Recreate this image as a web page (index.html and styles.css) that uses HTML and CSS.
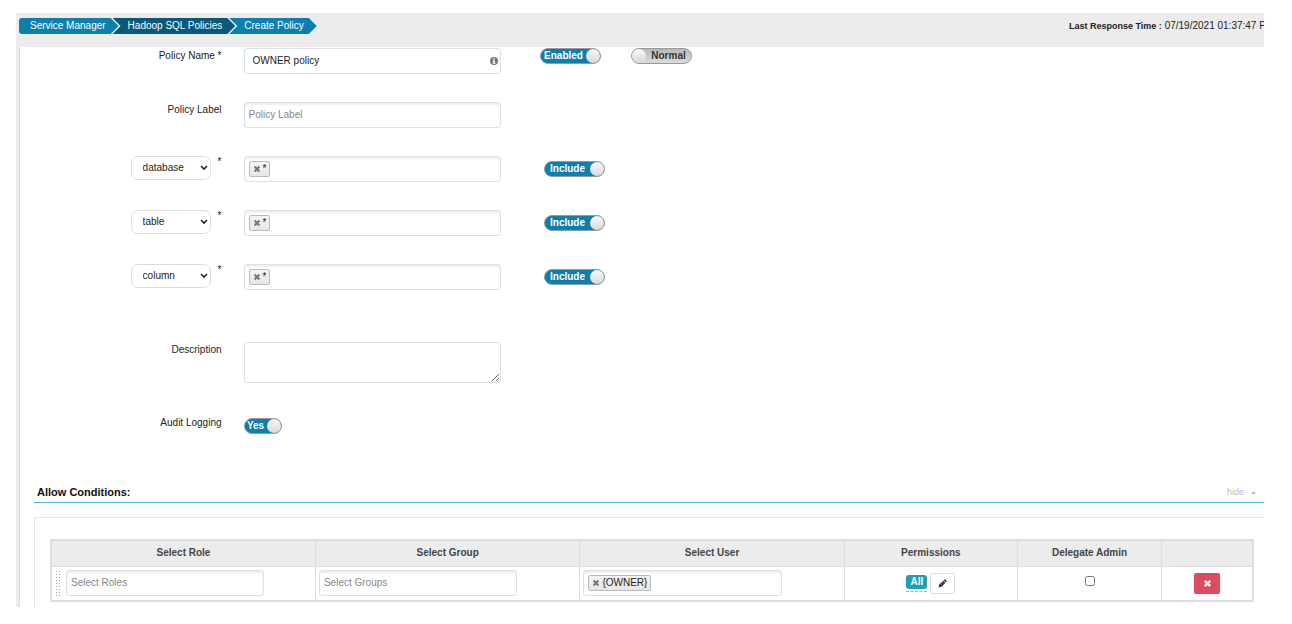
FILE: index.html
```
<!DOCTYPE html>
<html lang="en">
<head>
  <meta charset="UTF-8">
  <title>Create Policy</title>
  <link rel="stylesheet" href="styles.css">
</head>
<body>

  <!-- shared icons -->
  <svg class="sprite" aria-hidden="true">
    <symbol id="icon-times" viewBox="0 0 10 10">
      <path d="M2 2l6 6M8 2l-6 6" fill="none" stroke="currentColor" stroke-width="2.6"/>
    </symbol>
    <symbol id="icon-info" viewBox="0 0 16 16">
      <circle cx="8" cy="8" r="8" fill="currentColor"/>
      <path d="M6.5 2.5h3v2.6h-3zM5.4 6.4h4.2v5h1.2v1.9H5.4v-1.9h1.2V8.3H5.4z" fill="#fff"/>
    </symbol>
    <symbol id="icon-pencil" viewBox="0 0 16 16">
      <path d="M1 15l1-4.6L9.4 3l3.6 3.6L5.6 14zM10.3 2.1l1.3-1.3q.7-.6 1.4 0l2.2 2.2q.6.7 0 1.4l-1.3 1.3z" fill="currentColor"/>
      <path d="M4.5 10.8l5.5-5.5" stroke="#fff" stroke-width=".8"/>
      <path d="M2.3 12.2l1.5 1.5" stroke="#fff" stroke-width="1"/>
    </symbol>
  </svg>

  <div class="app">
    <header class="topbar">
      <nav class="breadcrumb" aria-label="Breadcrumb">
        <a href="#">Service Manager</a>
        <a href="#" class="dark">Hadoop SQL Policies</a>
        <a href="#" aria-current="page">Create Policy</a>
      </nav>
      <p class="response"><strong>Last Response Time :</strong> 07/19/2021 01:37:47 PM</p>
    </header>

    <main class="panel">
      <form class="policy-form">
        <div class="form-row">
          <label class="form-label" for="policyName">Policy Name *</label>
          <div class="field field-icon">
            <input type="text" id="policyName" value="OWNER policy">
            <svg class="info"><use href="#icon-info"/></svg>
          </div>
          <div class="switches">
            <label class="toggle"><input type="checkbox" checked><span>Enabled</span></label>
            <label class="toggle"><input type="checkbox"><span>Normal</span></label>
          </div>
        </div>

        <div class="form-row">
          <label class="form-label" for="policyLabel">Policy Label</label>
          <div class="field inset"><input type="text" id="policyLabel" placeholder="Policy Label"></div>
        </div>

        <div class="form-row">
          <div class="resource">
            <select aria-label="Database level"><option>database</option><option>url</option></select>
            <span class="required">*</span>
          </div>
          <div class="field inset">
            <span class="tag"><button type="button" aria-label="Remove"><svg><use href="#icon-times"/></svg></button>*</span>
            <input type="text" aria-label="Database">
          </div>
          <div class="switches include">
            <label class="toggle"><input type="checkbox" checked><span>Include</span></label>
          </div>
        </div>

        <div class="form-row">
          <div class="resource">
            <select aria-label="Table level"><option>table</option><option>udf</option></select>
            <span class="required">*</span>
          </div>
          <div class="field inset">
            <span class="tag"><button type="button" aria-label="Remove"><svg><use href="#icon-times"/></svg></button>*</span>
            <input type="text" aria-label="Table">
          </div>
          <div class="switches include">
            <label class="toggle"><input type="checkbox" checked><span>Include</span></label>
          </div>
        </div>

        <div class="form-row">
          <div class="resource">
            <select aria-label="Column level"><option>column</option><option>none</option></select>
            <span class="required">*</span>
          </div>
          <div class="field inset">
            <span class="tag"><button type="button" aria-label="Remove"><svg><use href="#icon-times"/></svg></button>*</span>
            <input type="text" aria-label="Column">
          </div>
          <div class="switches include">
            <label class="toggle"><input type="checkbox" checked><span>Include</span></label>
          </div>
        </div>

        <div class="form-row description">
          <label class="form-label" for="description">Description</label>
          <textarea id="description"></textarea>
        </div>

        <div class="form-row audit">
          <label class="form-label" for="audit">Audit Logging</label>
          <div>
            <label class="toggle small"><input type="checkbox" id="audit" checked><span>Yes</span></label>
          </div>
        </div>
      </form>

      <section class="conditions">
        <div class="section-head">
          <h2>Allow Conditions:</h2>
          <a href="#">hide <svg viewBox="0 0 10 6"><path d="M0 6l5-6 5 6z" fill="currentColor"/></svg></a>
        </div>

        <div class="table-box">
          <table>
            <thead>
              <tr>
                <th class="wide">Select Role</th>
                <th class="wide">Select Group</th>
                <th class="wide">Select User</th>
                <th class="perm">Permissions</th>
                <th class="admin">Delegate Admin</th>
                <th></th>
              </tr>
            </thead>
            <tbody>
              <tr>
                <td>
                  <div class="role-cell">
                    <span class="handle"></span>
                    <div class="field inset"><input type="text" placeholder="Select Roles" aria-label="Select Roles"></div>
                  </div>
                </td>
                <td><div class="field inset"><input type="text" placeholder="Select Groups" aria-label="Select Groups"></div></td>
                <td>
                  <div class="field inset">
                    <span class="tag"><button type="button" aria-label="Remove"><svg><use href="#icon-times"/></svg></button>{OWNER}</span>
                    <input type="text" aria-label="Select User">
                  </div>
                </td>
                <td>
                  <div class="perm-cell">
                    <span class="perm-value"><span class="badge">All</span></span>
                    <button type="button" class="btn-edit" aria-label="Edit permissions"><svg><use href="#icon-pencil"/></svg></button>
                  </div>
                </td>
                <td class="center"><input type="checkbox" class="check" aria-label="Delegate Admin"></td>
                <td class="center"><button type="button" class="btn-delete" aria-label="Delete row"><svg><use href="#icon-times"/></svg></button></td>
              </tr>
            </tbody>
          </table>
        </div>
      </section>
    </main>
  </div>

</body>
</html>
```
FILE: styles.css
```
* {
  box-sizing: border-box;
}

body {
  margin: 0;
  padding: 13px 28px 17px 16px;
  background: #fff;
  font-family: "Liberation Sans", Arial, sans-serif;
  font-size: 10px;
  line-height: 16px;
  color: #222;
}

input,
select,
textarea,
button {
  font: inherit;
  color: inherit;
}

button {
  padding: 0;
  cursor: pointer;
}

.sprite {
  position: absolute;
  width: 0;
  height: 0;
}

.app {
  overflow: hidden;
  background: #ececec;
}

/* top bar */
.topbar {
  display: flex;
  justify-content: space-between;
  align-items: flex-start;
  height: 34px;
  padding: 5px 0 0 3px;
}

.breadcrumb {
  display: flex;
}

.breadcrumb a {
  height: 16px;
  margin-right: -6px;
  padding: 0 13px 0 15px;
  background: #0b7fad;
  clip-path: polygon(0 0, calc(100% - 8px) 0, 100% 50%, calc(100% - 8px) 100%, 0 100%, 8px 50%);
  color: #fff;
  text-decoration: none;
  white-space: nowrap;
}

.breadcrumb a:first-child {
  padding-left: 11px;
  border-radius: 3px 0 0 3px;
  clip-path: polygon(0 0, calc(100% - 8px) 0, 100% 50%, calc(100% - 8px) 100%, 0 100%);
}

.breadcrumb .dark {
  background: #085a7c;
}

.response {
  width: 195px;
  margin: 0;
  overflow: hidden;
  white-space: nowrap;
}

.response strong {
  font-size: 9px;
}

/* form */
.panel {
  margin-left: 3px;
  border-left: 1px solid #ddd;
  background: #fff;
}

.policy-form {
  padding-top: 1px;
}

.form-row {
  display: grid;
  grid-template-columns: 16.2% 20.7% 1fr;
  column-gap: 22px;
  align-items: start;
  margin-bottom: 28px;
}

.form-label {
  text-align: right;
}

.field {
  display: flex;
  align-items: center;
  height: 26px;
  padding: 0 4px;
  border: 1px solid #dce1e6;
  border-radius: 3px;
  background: #fff;
}

.inset {
  box-shadow: inset 0 2px 2px #eee;
}

.field input {
  flex: 1;
  min-width: 0;
  padding: 0;
  border: 0;
  outline: 0;
  background: none;
}

.field ::placeholder {
  color: #888;
}

.field-icon {
  padding: 0 2px 0 8px;
}

.info {
  width: 8px;
  height: 8px;
  color: #777;
}

.tag {
  display: flex;
  align-items: center;
  gap: 2px;
  height: 16px;
  padding: 0 3px;
  border: 1px solid #bbb;
  border-radius: 2px;
  background: linear-gradient(#f4f4f4, #e6e6e6);
}

.tag button {
  display: flex;
  border: 0;
  background: none;
  color: #777;
}

.tag svg {
  width: 8px;
  height: 8px;
}

.resource {
  display: flex;
  justify-content: flex-end;
  gap: 7px;
}

.resource select {
  width: 80px;
  height: 24px;
  padding: 0 11px;
  border: 1px solid #ddd;
  border-radius: 7px;
  appearance: none;
  background: #fff url("data:image/svg+xml,%3Csvg xmlns='http://www.w3.org/2000/svg' width='8' height='6'%3E%3Cpath d='M1 1l3 3 3-3' fill='none' stroke='%23222' stroke-width='1.6'/%3E%3C/svg%3E") no-repeat right 2px center;
}

.required {
  line-height: 12px;
}

textarea {
  height: 41px;
  border: 1px solid #dce1e6;
  border-radius: 3px;
  resize: vertical;
}

.description {
  margin-top: 52px;
}

.audit {
  margin: 32px 0 0;
}

/* toggle switches */
.switches {
  display: flex;
  gap: 30px;
  padding-left: 17px;
}

.include {
  padding: 5px 0 0 21px;
}

.toggle {
  position: relative;
  display: flex;
  align-items: center;
  width: 61px;
  height: 16px;
  border: 1px solid #999;
  border-radius: 8px;
  background: linear-gradient(#b8b8b8, #dcdcdc);
  color: #333;
  font-weight: bold;
  line-height: 14px;
  cursor: pointer;
}

.toggle input {
  position: absolute;
  opacity: 0;
}

.toggle span {
  flex: 1;
  text-align: center;
}

.toggle::before {
  content: "";
  width: 14px;
  height: 14px;
  border-radius: 50%;
  background: linear-gradient(#fafafa, #d8d8d8);
}

.toggle:has(:checked) {
  background: #0b7fad;
  color: #fff;
}

.toggle:has(:checked)::before {
  order: 1;
}

.small {
  width: 38px;
  margin-top: 3px;
}

/* allow conditions */
.conditions {
  padding: 50px 0 0 14px;
}

.section-head {
  display: flex;
  justify-content: space-between;
  padding: 0 8px 2px 3px;
  border-bottom: 1px solid #4db2dc;
}

.section-head h2 {
  margin: 0;
  font-size: 11px;
  color: #111;
}

.section-head a {
  display: flex;
  align-items: center;
  gap: 7px;
  color: #bbb;
  font-size: 9px;
  text-decoration: none;
}

.section-head svg {
  width: 5px;
  height: 3px;
}

.table-box {
  margin-top: 14px;
  padding: 21px 10px 5px 15px;
  border: solid #e6e6e6;
  border-width: 1px 0 0 1px;
  border-radius: 3px 0 0 0;
}

table {
  width: 100%;
  table-layout: fixed;
  border-collapse: collapse;
  border: 2px solid #ddd;
}

th,
td {
  border: 1px solid #ddd;
}

th {
  height: 26px;
  padding: 0;
  background: #ececec;
  color: #444;
}

td {
  height: 35px;
  padding: 0 3px;
}

.wide {
  width: 22%;
}

.perm {
  width: 14.4%;
}

.admin {
  width: 12%;
}

td .field {
  width: 77%;
}

.role-cell {
  display: flex;
  align-items: center;
  gap: 6px;
}

.handle {
  width: 5px;
  height: 27px;
  background: radial-gradient(circle, #aaa 1px, transparent 1px) 0 0 / 3px 3px;
}

.perm-cell {
  display: flex;
  justify-content: center;
  align-items: center;
  gap: 3px;
}

.perm-value {
  padding-bottom: 2px;
  border-bottom: 1px dashed #8ab6e0;
}

.badge {
  display: block;
  height: 14px;
  padding: 0 4px;
  border-radius: 3px;
  background: #17a2b8;
  color: #fff;
  font-weight: bold;
  line-height: 14px;
}

.btn-edit {
  display: flex;
  justify-content: center;
  align-items: center;
  width: 25px;
  height: 21px;
  border: 1px solid #ddd;
  border-radius: 2px;
  background: #fff;
}

.btn-edit svg {
  width: 9px;
  height: 9px;
}

.center {
  text-align: center;
}

.check {
  width: 10px;
  height: 10px;
  margin: 0;
}

.btn-delete {
  display: inline-flex;
  justify-content: center;
  align-items: center;
  width: 26px;
  height: 21px;
  border: 0;
  border-radius: 2px;
  background: #dc4c5e;
  color: #fff;
  vertical-align: middle;
}

.btn-delete svg {
  width: 9px;
  height: 9px;
}
```
